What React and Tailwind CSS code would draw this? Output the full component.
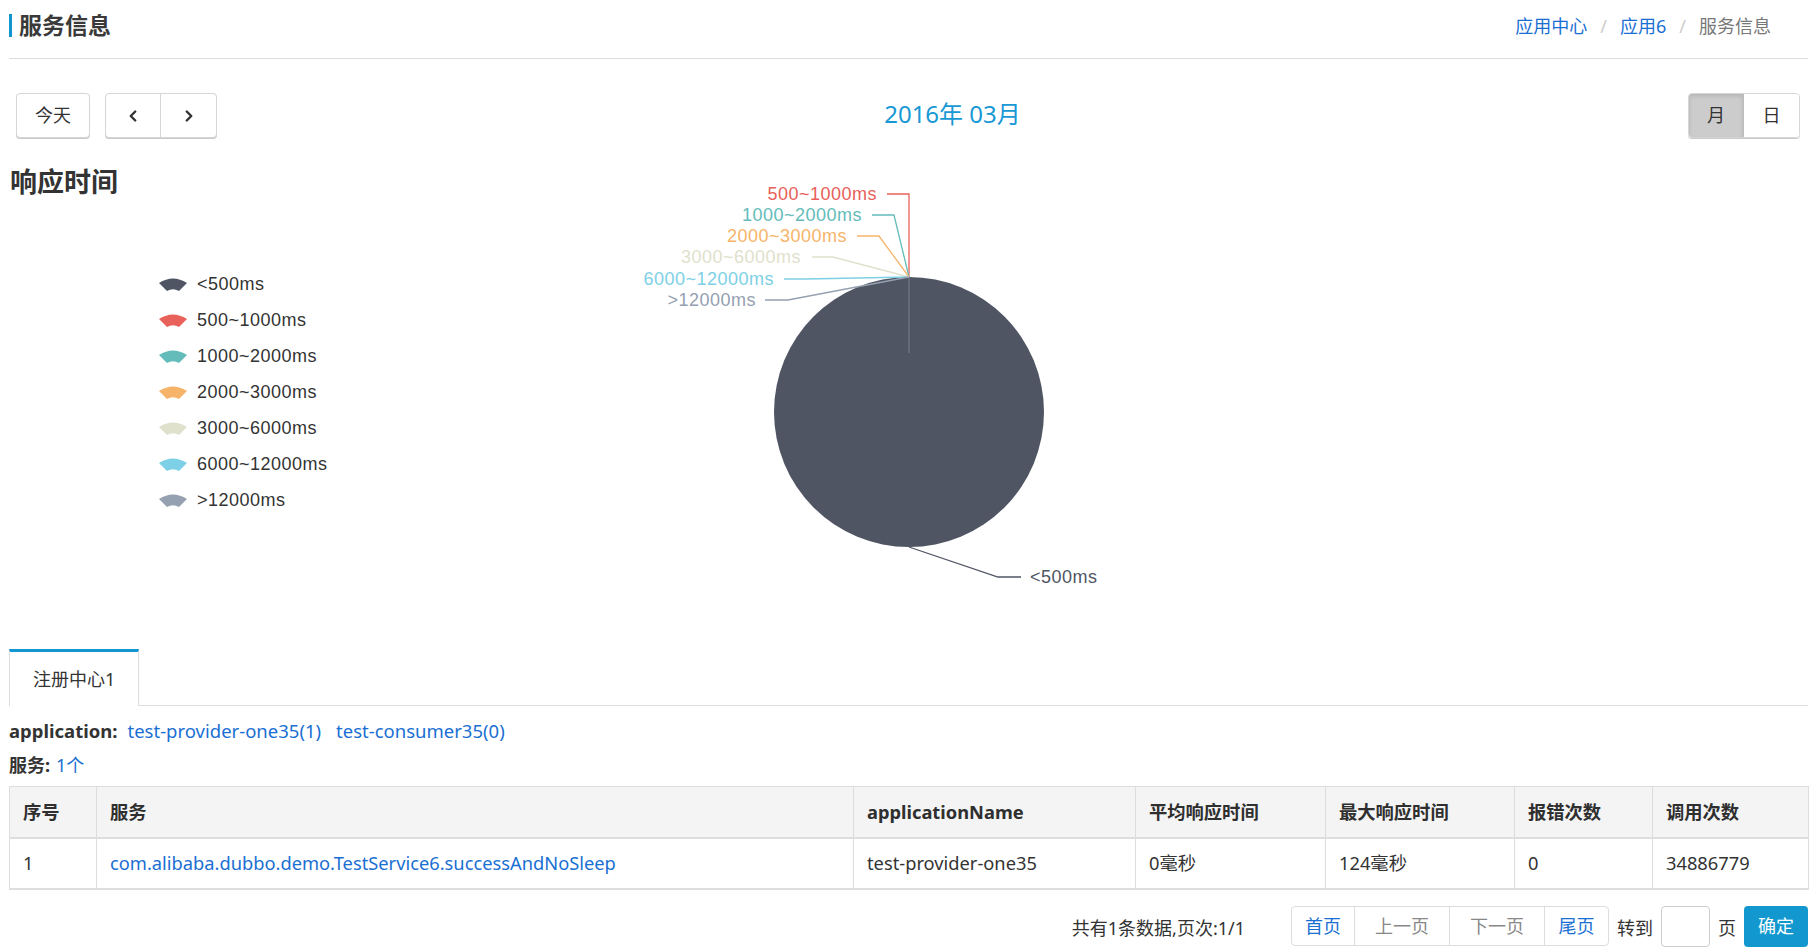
import { ChevronLeft, ChevronRight } from 'lucide-react';

const slices = [
  { name: '<500ms', color: '#4f5563' },
  { name: '500~1000ms', color: '#e8615a' },
  { name: '1000~2000ms', color: '#63bcba' },
  { name: '2000~3000ms', color: '#f6b46a' },
  { name: '3000~6000ms', color: '#dfe1cc' },
  { name: '6000~12000ms', color: '#7dd0e5' },
  { name: '>12000ms', color: '#95a0b1' },
];

// leader lines for the tiny slices, all from the pie top
const topLabels = [
  { i: 1, tx: 728, ty: 44, pts: '738,44 760,44 760,127' },
  { i: 2, tx: 713, ty: 65, pts: '723,65 745,65 760,127' },
  { i: 3, tx: 698, ty: 86, pts: '708,86 730,86 760,127' },
  { i: 4, tx: 652, ty: 107, pts: '663,107 684,107 760,127' },
  { i: 5, tx: 625, ty: 129, pts: '635,129 657,129 760,127' },
  { i: 6, tx: 607, ty: 150, pts: '616,150 639,150 760,127' },
];

function PieChart() {
  return (
    <svg width="1659" height="490" className="block shrink-0" fontFamily="'Liberation Sans', Arial, sans-serif">
      {/* legend */}
      {slices.map((s, i) => (
        <g key={s.name} transform={`translate(10 ${127 + i * 36})`}>
          <path d="M0 6 Q14 -3 28 6 L20 14 Q14 10.5 8 14 Z" fill={s.color} />
          <text x="38" y="7" dominantBaseline="central" fontSize="18" letterSpacing="0.5" fill="#333">{s.name}</text>
        </g>
      ))}

      {/* pie */}
      <circle cx="760" cy="262" r="135" fill="#4f5563" />
      <line x1="760" y1="127" x2="760" y2="203" stroke="#7b808b" strokeWidth="1" />

      {topLabels.map((l) => (
        <g key={l.i}>
          <polyline points={l.pts} fill="none" stroke={slices[l.i].color} strokeWidth="1.3" />
          <text x={l.tx} y={l.ty} textAnchor="end" dominantBaseline="central" fontSize="18" letterSpacing="0.5" fill={slices[l.i].color}>
            {slices[l.i].name}
          </text>
        </g>
      ))}

      <polyline points="760,397 849,427 872,427" fill="none" stroke="#4f5563" strokeWidth="1.3" />
      <text x="881" y="427" dominantBaseline="central" fontSize="18" letterSpacing="0.5" fill="#4f5563">&lt;500ms</text>
    </svg>
  );
}

const cols = [87, 757, 282, 190, 189, 138, 156];
const heads = ['序号', '服务', 'applicationName', '平均响应时间', '最大响应时间', '报错次数', '调用次数'];

function App() {
  return (
    <div className="min-h-screen w-full bg-white pl-[9px] pr-[7px] text-[#333] font-['Noto_Sans','Noto_Sans_CJK_SC',sans-serif]">
      {/* header */}
      <div className="h-[59px] border-b border-[#ddd] flex justify-between items-start">
        <div className="mt-[14px] h-[23px] border-l-[3px] border-[#1296d0] pl-[7px] flex items-center text-[23px] font-bold text-[#3a3a3a] leading-none">
          服务信息
        </div>
        <div className="mt-[14px] h-[23px] pr-[37px] flex items-center text-[18px] leading-none">
          <span className="text-[#1a6fd3]">应用中心</span>
          <span className="text-[#ccc] px-[13px]">/</span>
          <span className="text-[#1a6fd3]">应用6</span>
          <span className="text-[#ccc] px-[13px]">/</span>
          <span className="text-[#777]">服务信息</span>
        </div>
      </div>

      {/* toolbar */}
      <div className="mt-[34px] h-[45px] flex items-center justify-between">
        <div className="flex items-center">
          <button className="ml-[7px] w-[74px] h-[45px] rounded-[4px] border border-[#d6d6d6] shadow-[0_1px_0_#c9c9c9] bg-white text-[18px] text-[#333]">
            今天
          </button>
          <div className="ml-[15px] flex h-[45px] rounded-[4px] border border-[#d6d6d6] shadow-[0_1px_0_#c9c9c9] bg-white overflow-hidden">
            <button className="w-[55px] flex items-center justify-center border-r border-[#d6d6d6]">
              <ChevronLeft size={18} strokeWidth={3.2} color="#333" />
            </button>
            <button className="w-[55px] flex items-center justify-center">
              <ChevronRight size={18} strokeWidth={3.2} color="#333" />
            </button>
          </div>
        </div>
        <div className="text-[24px] text-[#1898d5] leading-none -mt-[4px]">2016年 03月</div>
        <div className="mr-[8px] flex h-[45px] rounded-[4px] border border-[#d6d6d6] shadow-[0_1px_0_#c9c9c9] overflow-hidden text-[18px]">
          <button className="w-[55px] bg-[#cccccc] shadow-[inset_0_2px_4px_rgba(0,0,0,0.12)] border-r border-[#bdbdbd]">月</button>
          <button className="w-[55px] bg-white">日</button>
        </div>
      </div>

      {/* chart */}
      <div className="mt-[12px] flex items-start">
        <h2 className="w-[140px] shrink-0 pt-[14px] pl-[1px] text-[27px] leading-[36px] font-bold text-[#333]">响应时间</h2>
        <PieChart />
      </div>

      {/* tabs */}
      <div className="mt-[9px] flex border-b border-[#ddd]">
        <div className="-mb-px h-[57px] px-[23px] flex items-center bg-white border-t-[3px] border-x border-[#ddd] border-t-[#1296d0] text-[18px] text-[#333]">
          注册中心1
        </div>
      </div>

      <div className="mt-[11px] h-[28px] flex items-center text-[18.5px]">
        <span className="font-bold">application:</span>
        <span className="ml-[10px] text-[#1a6fd3]">test-provider-one35(1)</span>
        <span className="ml-[15px] text-[#1a6fd3]">test-consumer35(0)</span>
      </div>
      <div className="mt-[6px] h-[28px] flex items-center text-[18px]">
        <span className="font-bold">服务:</span>
        <span className="ml-[6px] text-[#1a6fd3]">1个</span>
      </div>

      {/* table */}
      <table className="mt-[7px] w-full table-fixed border-collapse border border-[#ddd] text-[18.3px]">
        <colgroup>
          {cols.map((w, i) => (
            <col key={i} style={{ width: w }} />
          ))}
        </colgroup>
        <thead>
          <tr className="bg-[#f4f4f4] h-[51px]">
            {heads.map((h) => (
              <th key={h} className="text-left font-bold text-[#2f2f2f] px-[13px] border-x border-[#ddd] border-b-2">{h}</th>
            ))}
          </tr>
        </thead>
        <tbody>
          <tr className="h-[51px] border-b-2 border-[#ddd]">
            <td className="px-[13px] border-x border-[#ddd]">1</td>
            <td className="px-[13px] border-x border-[#ddd] text-[#1a6fd3]">com.alibaba.dubbo.demo.TestService6.successAndNoSleep</td>
            <td className="px-[13px] border-x border-[#ddd]">test-provider-one35</td>
            <td className="px-[13px] border-x border-[#ddd]">0毫秒</td>
            <td className="px-[13px] border-x border-[#ddd]">124毫秒</td>
            <td className="px-[13px] border-x border-[#ddd]">0</td>
            <td className="px-[13px] border-x border-[#ddd]">34886779</td>
          </tr>
        </tbody>
      </table>

      {/* pager */}
      <div className="mt-[16px] flex justify-end items-center text-[18px]">
        <span className="mt-[5px]">共有1条数据,页次:1/1</span>
        <div className="ml-[46px] flex h-[40px] rounded-[4px] border border-[#ddd] overflow-hidden">
          <span className="w-[63px] flex items-center justify-center text-[#1a6fd3] border-r border-[#ddd]">首页</span>
          <span className="w-[95px] flex items-center justify-center text-[#888] border-r border-[#ddd]">上一页</span>
          <span className="w-[95px] flex items-center justify-center text-[#888] border-r border-[#ddd]">下一页</span>
          <span className="w-[63px] flex items-center justify-center text-[#1a6fd3]">尾页</span>
        </div>
        <span className="ml-[8px] mt-[5px]">转到</span>
        <input className="ml-[8px] w-[49px] h-[41px] rounded-[4px] border border-[#ccc] outline-none" />
        <span className="ml-[8px] mt-[5px]">页</span>
        <button className="ml-[8px] w-[64px] h-[41px] rounded-[4px] bg-[#1298cf] text-white">确定</button>
      </div>
    </div>
  );
}

export default App;
